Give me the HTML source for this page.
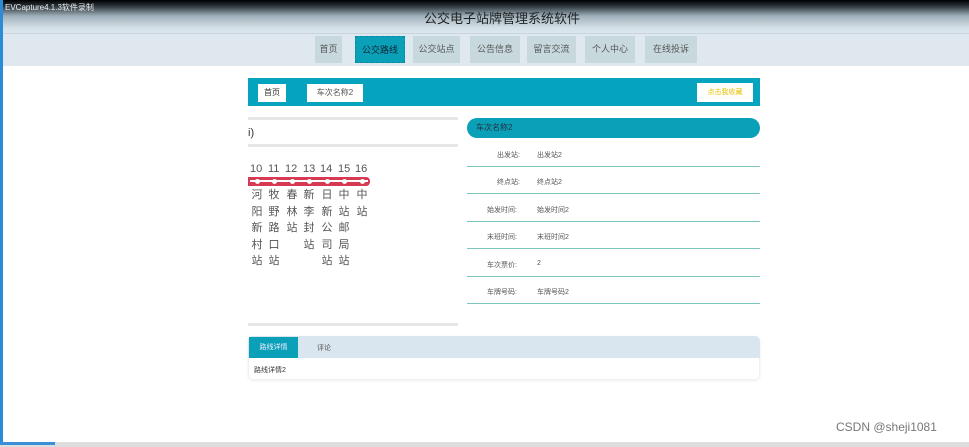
<!DOCTYPE html>
<html><head><meta charset="utf-8"><style>
*{margin:0;padding:0;box-sizing:border-box}
body{width:969px;height:447px;overflow:hidden;background:#fff;font-family:"Liberation Sans","Noto Sans CJK SC",sans-serif;position:relative}
.a{position:absolute}
.hdr{left:0;top:0;width:969px;height:33px;background:linear-gradient(#000 0px,#2a3338 6px,#9fb0ba 16px,#d6e1e8 28px,#dbe5ec 33px)}
.nav{left:0;top:33px;width:969px;height:33px;background:#dfe8ee;border-top:1px solid #c8d4dc}
.nb{top:36px;height:27px;background:#c8d9de;font-size:9px;color:#555;text-align:center;line-height:27px}
.row{left:467px;width:293px;height:27px;border-bottom:1px solid #7cc6bf;font-size:7px;color:#555}
.row span{position:absolute;top:10px}
.col{position:absolute;top:187px;width:14px;font-size:11px;line-height:16.5px;color:#555;text-align:center}
.num{position:absolute;top:161px;font-size:11px;line-height:16.5px;color:#555}
.dot{position:absolute;top:179px;width:5px;height:5px;border-radius:50%;background:#fff}
</style></head><body>
<div class="a hdr"></div>
<div class="a" style="left:5px;top:2px;font-size:8px;color:#eee">EVCapture4.1.3软件录制</div>
<div class="a" style="left:424px;top:8px;font-size:13px;color:#222">公交电子站牌管理系统软件</div>
<div class="a nav"></div>
<div class="a" style="left:0;top:0;width:3px;height:447px;background:#2a8bd6"></div>
<div class="a nb" style="left:315px;width:27px">首页</div>
<div class="a nb" style="left:355px;width:50px;background:#0aa0b8;color:#123;border:1px dashed #0a8aa0">公交路线</div>
<div class="a nb" style="left:413px;width:47px">公交站点</div>
<div class="a nb" style="left:470px;width:50px">公告信息</div>
<div class="a nb" style="left:527px;width:49px">留言交流</div>
<div class="a nb" style="left:585px;width:50px">个人中心</div>
<div class="a nb" style="left:645px;width:52px">在线投诉</div>
<div class="a" style="left:248px;top:78px;width:512px;height:28px;background:#05a3bd"></div>
<div class="a" style="left:258px;top:84px;width:28px;height:18px;background:#fff;font-size:8px;line-height:18px;text-align:center;color:#333">首页</div>
<div class="a" style="left:307px;top:84px;width:56px;height:18px;background:#fff;font-size:8px;line-height:18px;text-align:center;color:#555">车次名称2</div>
<div class="a" style="left:697px;top:83px;width:56px;height:19px;background:#fff;font-size:7px;line-height:19px;text-align:center;color:#e8c000">点击我收藏</div>
<div class="a" style="left:248px;top:117px;width:210px;height:3px;background:#e6e6e6"></div>
<div class="a" style="left:248px;top:127px;font-size:11px;color:#333">i)</div>
<div class="a" style="left:248px;top:144px;width:210px;height:3px;background:#e6e6e6"></div>
<div class="num" style="left:250px">10</div>
<div class="num" style="left:268px">11</div>
<div class="num" style="left:285px">12</div>
<div class="num" style="left:303px">13</div>
<div class="num" style="left:320px">14</div>
<div class="num" style="left:338px">15</div>
<div class="num" style="left:355px">16</div>
<div class="a" style="left:248px;top:177px;width:122px;height:9px;background:#d63a52;border-radius:0 4px 4px 0"></div>
<div class="a" style="left:250px;top:180px;width:118px;height:2px;background:#fff"></div>
<div class="dot" style="left:255px"></div><div class="dot" style="left:272px"></div><div class="dot" style="left:290px"></div><div class="dot" style="left:307px"></div><div class="dot" style="left:325px"></div><div class="dot" style="left:342px"></div><div class="dot" style="left:360px"></div>
<div class="col" style="left:250px">河<br>阳<br>新<br>村<br>站</div>
<div class="col" style="left:267px">牧<br>野<br>路<br>口<br>站</div>
<div class="col" style="left:285px">春<br>林<br>站</div>
<div class="col" style="left:302px">新<br>李<br>封<br>站</div>
<div class="col" style="left:320px">日<br>新<br>公<br>司<br>站</div>
<div class="col" style="left:337px">中<br>站<br>邮<br>局<br>站</div>
<div class="col" style="left:355px">中<br>站</div>
<div class="a" style="left:248px;top:323px;width:210px;height:3px;background:#e6e6e6"></div>
<div class="a" style="left:467px;top:118px;width:293px;height:20px;background:#0aa0b8;border-radius:10px;font-size:8px;line-height:20px;padding-left:9px;color:#234">车次名称2</div>
<div class="a row" style="top:140px"><span style="left:30px">出发站:</span><span style="left:70px">出发站2</span></div>
<div class="a row" style="top:167px"><span style="left:30px">终点站:</span><span style="left:70px">终点站2</span></div>
<div class="a row" style="top:195px"><span style="left:20px">始发时间:</span><span style="left:70px">始发时间2</span></div>
<div class="a row" style="top:222px"><span style="left:20px">末班时间:</span><span style="left:70px">末班时间2</span></div>
<div class="a row" style="top:250px"><span style="left:20px">车次票价:</span><span style="left:70px">2</span></div>
<div class="a row" style="top:277px"><span style="left:20px">车牌号码:</span><span style="left:70px">车牌号码2</span></div>
<div class="a" style="left:248px;top:336px;width:512px;height:44px;border:1px solid #eef0f2;border-radius:5px;box-shadow:0 1px 3px #eee"></div>
<div class="a" style="left:248px;top:336px;width:512px;height:22px;background:#dae6ef;border-radius:5px 5px 0 0"></div>
<div class="a" style="left:249px;top:337px;width:49px;height:21px;background:#0aa0b8;font-size:7px;color:#eef;line-height:21px;text-align:center">路线详情</div>
<div class="a" style="left:317px;top:343px;font-size:7px;color:#555">评论</div>
<div class="a" style="left:254px;top:365px;font-size:7px;color:#333">路线详情2</div>
<div class="a" style="left:836px;top:420px;font-size:12px;color:#777">CSDN @sheji1081</div>
<div class="a" style="left:0;top:442px;width:969px;height:5px;background:#ddd"></div>
<div class="a" style="left:0;top:442px;width:55px;height:3px;background:#3a8fd8"></div>
</body></html>
